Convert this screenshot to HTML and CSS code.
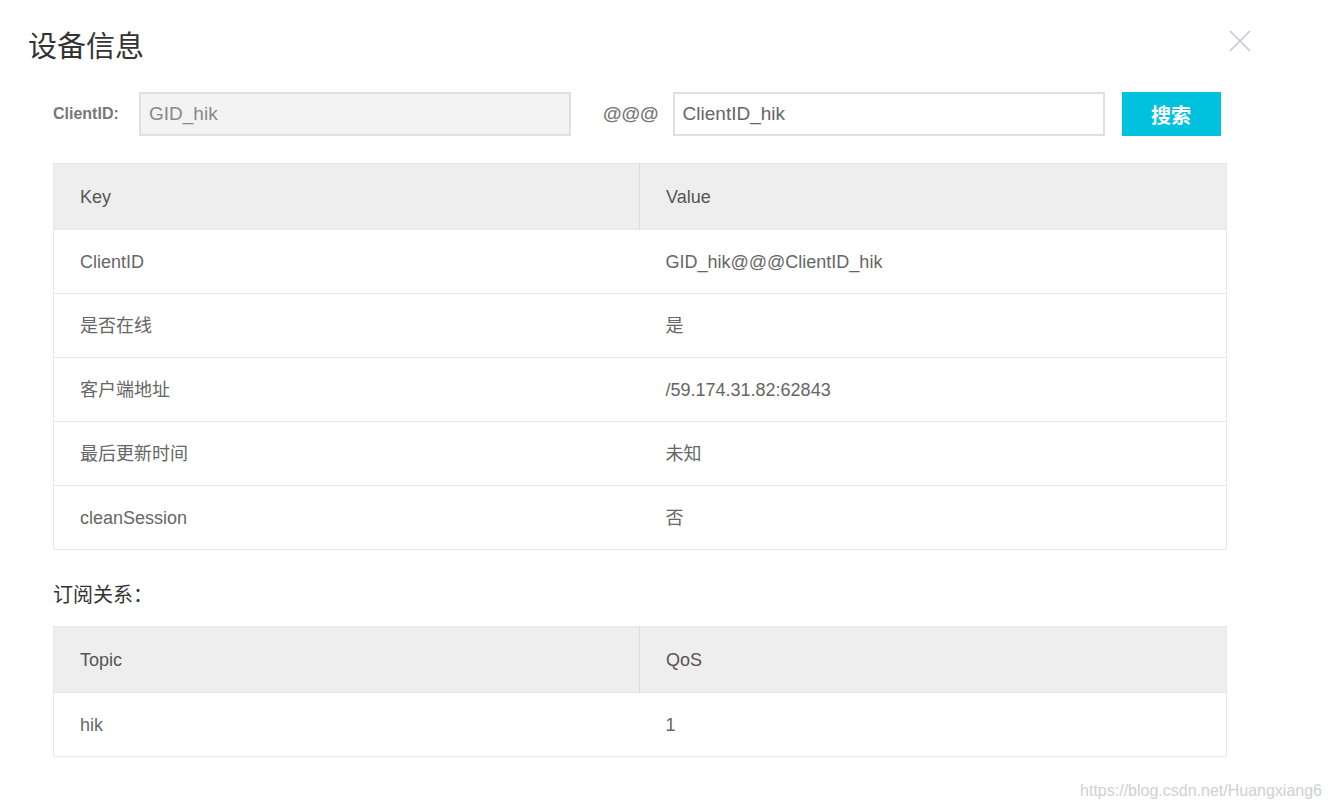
FILE: index.html
```html
<!DOCTYPE html>
<html lang="zh-CN">
<head>
    <meta charset="UTF-8">
    <title>设备信息</title>
    <link rel="stylesheet" href="styles.css">
</head>
<body>
    <div class="dialog">
        <h1 class="dialog-title">设备信息</h1>
        <span class="close-btn">
            <svg width="22" height="22" viewBox="0 0 22 22">
                <path d="M1 1 L21 21 M21 1 L1 21" stroke="#c3c9cf" stroke-width="1.6" fill="none"/>
            </svg>
        </span>

        <div class="dialog-body">
            <div class="search-row">
                <label class="search-label">ClientID:</label>
                <input class="search-input disabled" type="text" value="GID_hik" readonly>
                <span class="sep">@@@</span>
                <input class="search-input" type="text" value="ClientID_hik">
                <button class="search-btn">搜索</button>
            </div>

            <table class="info-table">
                <thead>
                    <tr><th>Key</th><th>Value</th></tr>
                </thead>
                <tbody>
                    <tr><td>ClientID</td><td>GID_hik@@@ClientID_hik</td></tr>
                    <tr><td>是否在线</td><td>是</td></tr>
                    <tr><td>客户端地址</td><td>/59.174.31.82:62843</td></tr>
                    <tr><td>最后更新时间</td><td>未知</td></tr>
                    <tr><td>cleanSession</td><td>否</td></tr>
                </tbody>
            </table>

            <div class="section-title">订阅关系：</div>

            <table class="info-table">
                <thead>
                    <tr><th>Topic</th><th>QoS</th></tr>
                </thead>
                <tbody>
                    <tr><td>hik</td><td>1</td></tr>
                </tbody>
            </table>
        </div>
    </div>

    <div class="watermark">https://blog.csdn.net/Huangxiang6</div>
</body>
</html>
```

FILE: styles.css
```css
body {
    margin: 0;
    padding: 0;
    background: #ffffff;
    font-family: "Liberation Sans", "Noto Sans CJK SC", sans-serif;
    color: #666;
}

.dialog {
    position: relative;
    padding: 29px 0 0 28px;
    width: 1230px;
}

.dialog-title {
    margin: 0;
    font-size: 29px;
    line-height: 36px;
    font-weight: normal;
    color: #333;
}

.close-btn {
    position: absolute;
    top: 30px;
    left: 1229px;
    width: 22px;
    height: 22px;
}

.dialog-body {
    margin-left: 25px;
    width: 1174px;
}

.search-row {
    display: flex;
    align-items: center;
    margin-top: 27px;
    height: 44px;
}

.search-label {
    width: 86px;
    font-size: 16px;
    font-weight: bold;
    color: #777;
}

.search-input {
    box-sizing: border-box;
    width: 432px;
    height: 44px;
    padding: 0 8px;
    border: 2px solid #e0e0e0;
    font-family: inherit;
    font-size: 19px;
    color: #666;
    background: #fff;
    outline: none;
}

.search-input.disabled {
    background: #f3f3f3;
    color: #888;
}

.sep {
    margin: 0 14px 0 32px;
    font-size: 19px;
    font-weight: bold;
    color: #777;
}

.search-btn {
    margin-left: 17px;
    width: 99px;
    height: 44px;
    border: none;
    background: #00c1de;
    color: #fff;
    font-family: inherit;
    font-size: 20px;
    font-weight: bold;
    cursor: pointer;
}

.info-table {
    width: 100%;
    margin-top: 27px;
    border-collapse: collapse;
    border: 1px solid #e8e8e8;
    table-layout: fixed;
}

.info-table th,
.info-table td {
    height: 63px;
    padding: 0 0 0 26px;
    text-align: left;
    font-size: 18px;
    line-height: 20px;
    font-weight: normal;
    color: #666;
}

.info-table th {
    height: 65px;
    background: #eeeeee;
    color: #555;
}

.info-table th:first-child {
    width: 559px;
    border-right: 1px solid #dcdcdc;
}

.info-table td {
    border-top: 1px solid #e8e8e8;
}

.section-title {
    margin-top: 30px;
    font-size: 20px;
    line-height: 30px;
    color: #333;
}

.section-title + .info-table {
    margin-top: 16px;
}

.watermark {
    position: absolute;
    top: 782px;
    right: 9px;
    font-size: 16px;
    color: #d0d0d0;
}
```
